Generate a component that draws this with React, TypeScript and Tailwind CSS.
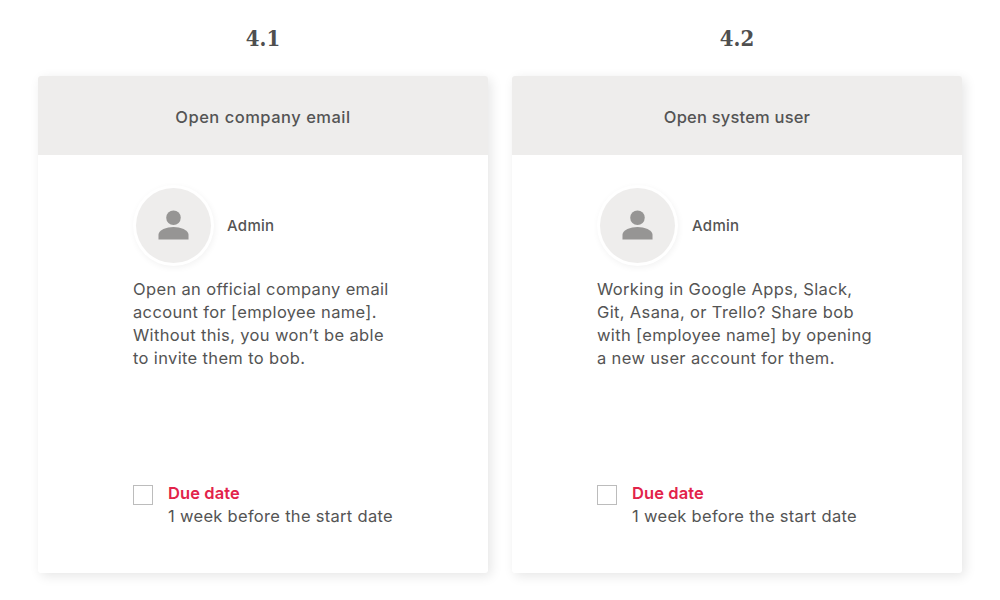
const font = "font-['Inter','Liberation_Sans',sans-serif]";

function UserIcon() {
  return (
    <svg width="31" height="31" viewBox="0 0 32 32" className="fill-[#969594]">
      <circle cx="16" cy="8" r="7.5" />
      <path d="M0.5 30.5v-5C0.5 20.5 9 17.5 16 17.5s15.5 3 15.5 8v5z" />
    </svg>
  );
}

interface CardProps {
  number: string;
  title: string;
  titleSpacing: string;
  indent: string;
  nameGap: string;
  lines: string[];
}

function Card({ number, title, titleSpacing, indent, nameGap, lines }: CardProps) {
  return (
    <div className="w-[450px] flex flex-col">
      <h2 className="h-[76px] pt-[24px] text-center font-['DejaVu_Serif_Condensed','DejaVu_Serif',serif] font-bold text-[22px] leading-[28px] text-[#4f4f4f]">
        {number}
      </h2>
      <div className="h-[497px] bg-white rounded-[3px] shadow-[3px_3px_12px_rgba(0,0,0,0.1)] flex flex-col">
        <div className={`h-[79px] shrink-0 pt-[3px] rounded-t-[3px] bg-[#eeedec] flex items-center justify-center text-[16.5px] font-medium text-[#545454] ${titleSpacing}`}>
          {title}
        </div>
        <div className={`flex-1 flex flex-col ${indent}`}>
          <div className="mt-[33px] ml-[3px] flex items-center">
            <div className="w-[75px] h-[75px] rounded-full bg-[#eeedec] flex items-center justify-center shadow-[0_0_0_3px_#fff,1px_2px_6px_3px_rgba(0,0,0,0.05)]">
              <UserIcon />
            </div>
            <span className={`${nameGap} pt-[2px] text-[15px] tracking-[0.3px] font-medium text-[#545454]`}>Admin</span>
          </div>
          <div className="mt-[15px] text-[16.5px] tracking-[0.35px] leading-[23px] text-[#545454]">
            {lines.map((line) => (
              <div key={line} className="whitespace-nowrap">{line}</div>
            ))}
          </div>
          <div className="mt-[112px] flex">
            <div className="mt-[3px] w-[20px] h-[20px] border border-[#bcbcbc] bg-white" />
            <div className="ml-[15px] text-[16.5px] tracking-[0.3px] leading-[23px] whitespace-nowrap">
              <div className="font-semibold tracking-[0.1px] text-[#e2234a]">Due date</div>
              <div className="text-[#545454]">1 week before the start date</div>
            </div>
          </div>
        </div>
      </div>
    </div>
  );
}

export default function App() {
  return (
    <div className={`w-[1000px] h-[600px] overflow-hidden bg-white flex gap-[24px] pl-[38px] ${font}`}>
      <Card
        number="4.1"
        title="Open company email"
        titleSpacing="tracking-[0.5px]"
        indent="pl-[95px]"
        nameGap="ml-[16px]"
        lines={[
          'Open an official company email',
          'account for [employee name].',
          'Without this, you won’t be able',
          'to invite them to bob.',
        ]}
      />
      <Card
        number="4.2"
        title="Open system user"
        titleSpacing="tracking-[0.2px]"
        indent="pl-[85px]"
        nameGap="ml-[17px]"
        lines={[
          'Working in Google Apps, Slack,',
          'Git, Asana, or Trello? Share bob',
          'with [employee name] by opening',
          'a new user account for them.',
        ]}
      />
    </div>
  );
}
